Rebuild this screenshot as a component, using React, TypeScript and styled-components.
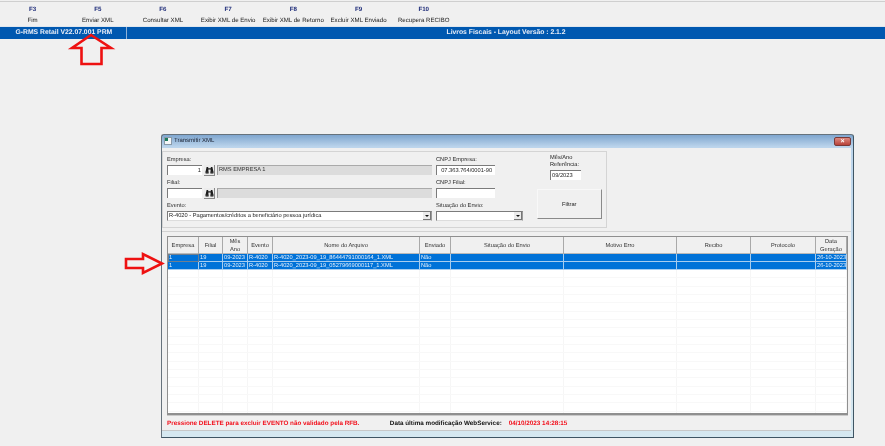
import React from 'react';
import styled, { createGlobalStyle } from 'styled-components';

const Global = createGlobalStyle`
  html, body { margin: 0; padding: 0; background: #f0f0f0; overflow: hidden; }
  * { box-sizing: border-box; }
`;

const Page = styled.div`
  position: relative; width: 885px; height: 446px; background: #f0f0f0; overflow: hidden;
  font-family: "Liberation Sans", Arial, sans-serif; font-size: 5.7px; color: #222;
  padding-top: 1px; text-rendering: geometricPrecision; filter: blur(0.25px);
`;
const TopLine = styled.div`height: 1px; background: #cfcfcf;`;
const Toolbar = styled.div`display: flex; height: 24.5px; padding-top: 4px; font-size: 6.1px;`;
const ToolItem = styled.div`
  width: 65.2px; display: flex; flex-direction: column; align-items: center; gap: 2.5px; line-height: 8px; white-space: nowrap;
`;
const FKey = styled.span`font-weight: 700; color: #1c2a78; font-size: 6.2px;`;
const StatusBar = styled.div`
  display: flex; height: 12.5px; background: #0058b0; color: #e8eef8; font-weight: 700; font-size: 6.8px;
  align-items: center; box-shadow: 0 -1px 0 #dfe6ee;
`;
const Version = styled.div`
  width: 127px; height: 100%; padding-left: 15.5px; display: flex; align-items: center; border-right: 1px solid #8fb2d8; white-space: nowrap;
`;
const Module = styled.div`flex: 1; text-align: center;`;

const Win = styled.div`
  position: absolute; left: 161px; top: 134px; width: 693px; height: 304px;
  border: 1px solid #66727c; border-right-color: #3f5563; border-bottom-color: #3f5563; border-radius: 3px 3px 0 0;
  background: linear-gradient(180deg, #7fa6cf 0, #bcd5ec 12px, #d6e8f0 100%);
  padding: 0 2px 6px 0; display: flex; flex-direction: column;
`;
const TitleBar = styled.div`
  height: 12.5px; flex: none; display: flex; align-items: center; gap: 2px; padding-left: 2px; color: #1a2030; font-size: 6px;
`;
const CloseBtn = styled.div`
  margin-left: auto; width: 17px; height: 9px; border: 1px solid #7a3a38; border-radius: 2px;
  background: linear-gradient(180deg, #dd8a80, #b8423a); color: #fff; font-size: 7px; font-weight: 700; line-height: 7px; text-align: center;
`;
const Content = styled.div`
  flex: 1; background: #f0f0f0; display: flex; flex-direction: column; padding: 3px 0 0 0; border-bottom: 1px solid #c8c8c8;
`;
const Group = styled.div`
  width: 445px; height: 77px; border: 1px solid #d4d4d4; padding: 3.5px 0 0 4px; display: flex;
`;
const LeftCol = styled.div`
  width: 265px; display: flex; flex-direction: column; gap: 3px;
`;
const MidCol = styled.div`
  width: 87px; margin-left: 4px; display: flex; flex-direction: column; gap: 3px;
`;
const RightCol = styled.div`
  margin-left: 14px; display: flex; flex-direction: column;
`;
const Field = styled.div`display: flex; flex-direction: column; height: 20px;`;
const Label = styled.label`height: 10px; line-height: 10.5px; white-space: nowrap; color: #2c2c2c;`;
const Row = styled.div`display: flex; gap: 2px; align-items: stretch; height: 10px;`;
const Input = styled.div<{ $w: number; $right?: boolean }>`
  width: ${(p) => p.$w}px; height: 10px; background: #fff; line-height: 10px; white-space: nowrap; overflow: hidden;
  border-left: 1px solid #7b7b7b; border-top: 1px solid #7b7b7b; padding: 0 1px;
  text-align: ${(p) => (p.$right ? 'right' : 'left')};
`;
const ReadOnly = styled.div`
  flex: 1; background: #dcdcdc; border-left: 1px solid #9b9b9b; border-top: 1px solid #aaa; line-height: 9px; padding-left: 1px; color: #333; white-space: nowrap;
`;
const IconBtn = styled.div`
  width: 11px; height: 11px; background: #ececec; border-right: 1px solid #888; border-bottom: 1px solid #888;
  display: flex; align-items: center; justify-content: center;
`;
const Select = styled.div<{ $w: number }>`
  width: ${(p) => p.$w}px; height: 10px; background: #fff; border-left: 1px solid #7b7b7b; border-top: 1px solid #7b7b7b;
  border-right: 1px solid #9a9a9a; border-bottom: 1px solid #dcdcdc;
  display: flex; align-items: center; justify-content: space-between; padding-left: 1px; white-space: nowrap; overflow: hidden;
`;
const Caret = styled.div`
  flex: none; width: 8px; height: 8px; background: #ececec; border-right: 1px solid #777; border-bottom: 1px solid #777;
  display: flex; align-items: center; justify-content: center;
  &::after { content: ""; border: 2px solid transparent; border-top: 2.5px solid #111; border-bottom: 0; }
`;
const RefBlock = styled.div`
  margin-left: 13px; display: flex; flex-direction: column; margin-top: 0;
`;
const RefLabel = styled.div`line-height: 7px; height: 15px;`;
const FilterBtn = styled.button`
  width: 64.5px; height: 30px; margin-top: 9px; background: #f0f0f0; color: #222; font: inherit;
  border: 1px solid; border-color: #f8f8f8 #8a8a8a #8a8a8a #f8f8f8; padding: 0;
`;
const Divider = styled.div`height: 1px; background: #d2d2d2; margin-top: 3px;`;
const GridBox = styled.div`
  margin: 4px 0 0 5px; width: 681px; height: 179px; background: #fff; flex: none;
  border: 1px solid #8f8f8f; border-width: 1px 1px 2px 1px; box-shadow: 0 1px 0 #c9c9c9; overflow: hidden;
`;
const cols = '31px 24px 25px 25px 147px 31px 113px 113px 74px 65px 31px';
const HeaderRow = styled.div`
  display: grid; grid-template-columns: ${cols}; height: 17px; background: #f0f0f0; border-bottom: 1px solid #b9b9b9;
`;
const HeaderCell = styled.div`
  display: flex; align-items: center; justify-content: center; text-align: center; line-height: 8px; color: #333;
  border-right: 1px solid #a9a9a9; padding-top: 1.5px;
`;
const DataRow = styled.div<{ $sel?: boolean }>`
  display: grid; grid-template-columns: ${cols}; height: 8.33px; line-height: 8px;
  background: ${(p) => (p.$sel ? '#0072d8' : '#fff')}; color: ${(p) => (p.$sel ? '#e6f1fc' : '#333')};
  border-bottom: 1px solid ${(p) => (p.$sel ? '#a8cdef' : '#f8f8f8')};
`;
const Cell = styled.div<{ $focus?: boolean; $sel?: boolean }>`
  padding: 0.5px 0 0 1px; white-space: nowrap;
  border-right: 1px solid ${(p) => (p.$sel ? '#a8cdef' : '#f6f6f6')};
  ${(p) => (p.$focus ? 'outline: 1px solid #6f7f90; outline-offset: -1px;' : '')}
`;
const Footer = styled.div`
  display: flex; font-weight: 700; height: 15px; align-items: center; padding: 3px 0 0 5px; white-space: nowrap; font-size: 6.3px;
`;
const Alert = styled.span`color: #f2101c;`;
const ModText = styled.span`color: #111; margin-left: 30.5px; width: 119px;`;
const Arrow = styled.svg`position: absolute; overflow: visible; pointer-events: none;`;

const keys = [
  ['F3', 'Fim'], ['F5', 'Enviar XML'], ['F6', 'Consultar XML'], ['F7', 'Exibir XML de Envio'],
  ['F8', 'Exibir XML de Retorno'], ['F9', 'Excluir XML Enviado'], ['F10', 'Recupera RECIBO'],
];
const headers = ['Empresa', 'Filial', 'Mês/ Ano', 'Evento', 'Nome do Arquivo', 'Enviado', 'Situação do Envio', 'Motivo Erro', 'Recibo', 'Protocolo', 'Data Geração'];
const rows = [
  ['1', '19', '09-2023', 'R-4020', 'R-4020_2023-09_19_86444791000164_1.XML', 'Não', '', '', '', '', '26-10-2023'],
  ['1', '19', '09-2023', 'R-4020', 'R-4020_2023-09_19_05279669000117_1.XML', 'Não', '', '', '', '', '26-10-2023'],
];
const empty = Array.from({ length: 19 }, (_, i) => i);

const Binoculars = () => (
  <svg width="9" height="8" viewBox="0 0 9 8">
    <path d="M1.6 1h1.6v1.2h2.6V1h1.6l1.2 5.6H5.6V3.6H3.4v3H.4z" fill="#1c1c1c" />
    <rect x="0.6" y="5.6" width="3" height="2" fill="#333" /><rect x="5.4" y="5.6" width="3" height="2" fill="#333" />
  </svg>
);
const AppIcon = () => (
  <svg width="8" height="8" viewBox="0 0 8 8">
    <rect x="0.5" y="0.5" width="7" height="7" fill="#f4f6f8" stroke="#8a9aa8" />
    <rect x="1" y="1" width="3" height="3" fill="#1c7c5c" />
  </svg>
);

export default function App() {
  return (
    <Page>
      <Global />
      <TopLine />
      <Toolbar>
        {keys.map(([k, l]) => (
          <ToolItem key={k}><FKey>{k}</FKey><span>{l}</span></ToolItem>
        ))}
      </Toolbar>
      <StatusBar>
        <Version>G-RMS Retail V22.07.001 PRM</Version>
        <Module>Livros Fiscais - Layout Versão : 2.1.2</Module>
      </StatusBar>

      <Win>
        <TitleBar><AppIcon /><span>Transmitir XML</span><CloseBtn>×</CloseBtn></TitleBar>
        <Content>
          <Group>
            <LeftCol>
              <Field>
                <Label>Empresa:</Label>
                <Row><Input $w={35} $right>1</Input><IconBtn><Binoculars /></IconBtn><ReadOnly>RMS EMPRESA 1</ReadOnly></Row>
              </Field>
              <Field>
                <Label>Filial:</Label>
                <Row><Input $w={35} /><IconBtn><Binoculars /></IconBtn><ReadOnly /></Row>
              </Field>
              <Field>
                <Label>Evento:</Label>
                <Select $w={265}>R-4020 - Pagamentos/créditos a beneficiário pessoa jurídica<Caret /></Select>
              </Field>
            </LeftCol>
            <MidCol>
              <Field>
                <Label>CNPJ Empresa:</Label>
                <Input $w={59}>&nbsp;&nbsp;07.363.764/0001-90</Input>
              </Field>
              <Field>
                <Label>CNPJ Filial:</Label>
                <Input $w={59} />
              </Field>
              <Field>
                <Label>Situação do Envio:</Label>
                <Select $w={87}><span /><Caret /></Select>
              </Field>
            </MidCol>
            <RightCol>
              <RefBlock>
                <RefLabel>Mês/Ano<br />Referência:</RefLabel>
                <Input $w={31}>09/2023</Input>
              </RefBlock>
              <FilterBtn>Filtrar</FilterBtn>
            </RightCol>
          </Group>
          <Divider />
          <GridBox>
            <HeaderRow>
              {headers.map((h) => <HeaderCell key={h}>{h.includes('/ ') ? <span>Mês<br />Ano</span> : h === 'Data Geração' ? <span>Data<br />Geração</span> : h}</HeaderCell>)}
            </HeaderRow>
            {rows.map((r, i) => (
              <DataRow $sel key={i}>
                {r.map((c, j) => <Cell $sel $focus={i === 0 && j === 0} key={j}>{c}</Cell>)}
              </DataRow>
            ))}
            {empty.map((i) => (
              <DataRow key={i}>{headers.map((h) => <Cell key={h} />)}</DataRow>
            ))}
          </GridBox>
          <Footer>
            <Alert>Pressione DELETE para excluir EVENTO não validado pela RFB.</Alert>
            <ModText>Data última modificação WebService:</ModText>
            <Alert>04/10/2023 14:28:15</Alert>
          </Footer>
        </Content>
      </Win>

      <Arrow style={{ left: 0, top: 0 }} width="885" height="446">
        <path d="M91 35 L72 48 H81.5 V64 H101.5 V48 H111 Z" fill="none" stroke="#ee1111" strokeWidth="2.6" />
        <path d="M126 259 H143 V254 L162 263.5 L143 273 V268 H126 Z" fill="none" stroke="#ee1111" strokeWidth="2.6" />
      </Arrow>
    </Page>
  );
}
